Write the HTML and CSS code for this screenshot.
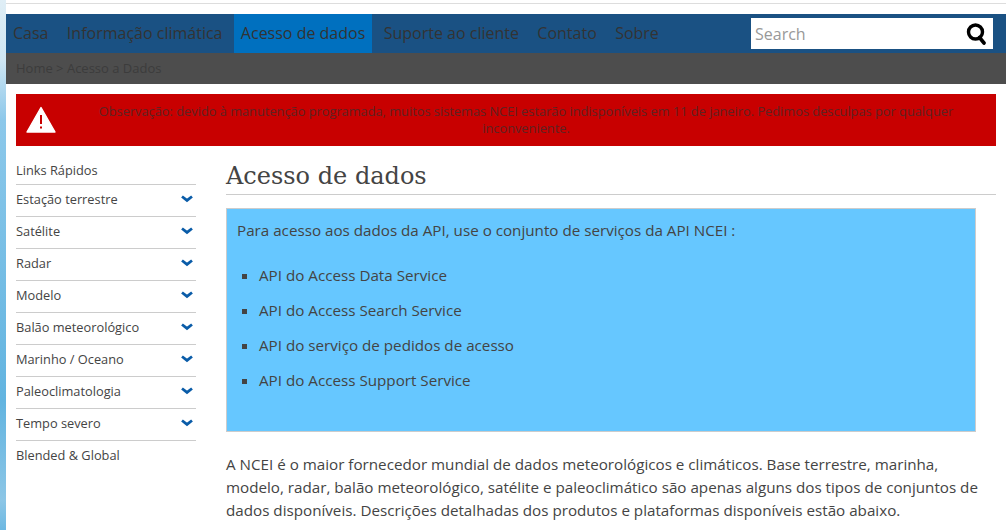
FILE: index.html
```html
<!DOCTYPE html>
<html lang="pt">
<head>
<meta charset="utf-8">
<title>Acesso de dados</title>
<link rel="stylesheet" href="styles.css">
</head>
<body>
<div class="page">
  <nav class="topnav">
    <ul class="menu">
      <li><a>Casa</a></li>
      <li><a>Informação climática</a></li>
      <li class="active"><a>Acesso de dados</a></li>
      <li><a>Suporte ao cliente</a></li>
      <li><a>Contato</a></li>
      <li><a>Sobre</a></li>
    </ul>
    <div class="search">
      <span class="search-text">Search</span>
      <svg class="search-icon" width="20" height="22" viewBox="0 0 20 22"><circle cx="9.5" cy="9" r="7" fill="none" stroke="#000" stroke-width="3.4"/><path d="M13.5 14.5L18 20" stroke="#000" stroke-width="3.6" stroke-linecap="round"/></svg>
    </div>
  </nav>
  <div class="crumbs">Home &gt; Acesso a Dados</div>
  <div class="alert">
    <svg class="alert-icon" width="30" height="28" viewBox="0 0 30 28"><path d="M15 1.5L29 26H1z" fill="#fff" stroke="#fff" stroke-width="1.4" stroke-linejoin="round"/><rect x="14" y="9" width="2" height="9" fill="#c80000"/><rect x="14" y="20.5" width="2" height="2" fill="#c80000"/></svg>
    <p class="alert-text">Observação: devido à manutenção programada, muitos sistemas NCEI estarão indisponíveis em 11 de janeiro. Pedimos desculpas por qualquer inconveniente.</p>
  </div>
  <div class="columns">
    <aside class="side">
      <div class="side-item">Links Rápidos</div>
      <div class="side-item has-arrow">Estação terrestre<svg class="chev" width="12" height="8" viewBox="0 0 12 8"><path d="M1 1.5L6 5.4l5-3.9" fill="none" stroke="#0a5ca8" stroke-width="2.8"/></svg></div>
      <div class="side-item has-arrow">Satélite<svg class="chev" width="12" height="8" viewBox="0 0 12 8"><path d="M1 1.5L6 5.4l5-3.9" fill="none" stroke="#0a5ca8" stroke-width="2.8"/></svg></div>
      <div class="side-item has-arrow">Radar<svg class="chev" width="12" height="8" viewBox="0 0 12 8"><path d="M1 1.5L6 5.4l5-3.9" fill="none" stroke="#0a5ca8" stroke-width="2.8"/></svg></div>
      <div class="side-item has-arrow">Modelo<svg class="chev" width="12" height="8" viewBox="0 0 12 8"><path d="M1 1.5L6 5.4l5-3.9" fill="none" stroke="#0a5ca8" stroke-width="2.8"/></svg></div>
      <div class="side-item has-arrow">Balão meteorológico<svg class="chev" width="12" height="8" viewBox="0 0 12 8"><path d="M1 1.5L6 5.4l5-3.9" fill="none" stroke="#0a5ca8" stroke-width="2.8"/></svg></div>
      <div class="side-item has-arrow">Marinho / Oceano<svg class="chev" width="12" height="8" viewBox="0 0 12 8"><path d="M1 1.5L6 5.4l5-3.9" fill="none" stroke="#0a5ca8" stroke-width="2.8"/></svg></div>
      <div class="side-item has-arrow">Paleoclimatologia<svg class="chev" width="12" height="8" viewBox="0 0 12 8"><path d="M1 1.5L6 5.4l5-3.9" fill="none" stroke="#0a5ca8" stroke-width="2.8"/></svg></div>
      <div class="side-item has-arrow">Tempo severo<svg class="chev" width="12" height="8" viewBox="0 0 12 8"><path d="M1 1.5L6 5.4l5-3.9" fill="none" stroke="#0a5ca8" stroke-width="2.8"/></svg></div>
      <div class="side-item">Blended &amp; Global</div>
    </aside>
    <main class="content">
      <h1 class="title">Acesso de dados</h1>
      <section class="infobox">
        <p class="infobox-lead">Para acesso aos dados da API, use o conjunto de serviços da API NCEI :</p>
        <ul class="api-list">
          <li>API do Access Data Service</li>
          <li>API do Access Search Service</li>
          <li>API do serviço de pedidos de acesso</li>
          <li>API do Access Support Service</li>
        </ul>
      </section>
      <p class="intro">A NCEI é o maior fornecedor mundial de dados meteorológicos e climáticos. Base terrestre, marinha, modelo, radar, balão meteorológico, satélite e paleoclimático são apenas alguns dos tipos de conjuntos de dados disponíveis. Descrições detalhadas dos produtos e plataformas disponíveis estão abaixo.</p>
    </main>
  </div>
</div>
</body>
</html>
```
FILE: styles.css
```css
* { box-sizing: border-box; }
html, body { margin: 0; padding: 0; height: 530px; overflow: hidden; }
body {
  font-family: "Open Sans", "Liberation Sans", sans-serif;
  color: #444;
  background: linear-gradient(to bottom, #dfeef6 0, #cfe6f3 60px, #8cc8ea 120px, #62b4e0 400px, #8cc6e6 500px, #6db8e2 530px);
}
.page { margin-left: 6px; height: 530px; background: #fff; padding-top: 14px; position: relative; overflow: hidden; }
.page::before { content: ""; position: absolute; top: 3px; left: 0; right: 0; height: 1px; background: #ddd; }
.topnav { display: flex; justify-content: space-between; height: 39px; background: #1a5183; padding-right: 13px; }
.menu { display: flex; gap: 4px; list-style: none; margin: 0; padding: 0; font-size: 16px; line-height: 39px; color: #333; }
.menu li { padding: 0 7.2px; }
.menu li:first-child { padding-left: 7px; }
.menu .active { background: #0070bf; }
.search { width: 242px; height: 31px; margin-top: 4px; background: #fff; display: flex; align-items: center; justify-content: space-between; padding: 0 7px 0 4px; }
.search-text { font-size: 16px; color: #999; }
.crumbs { height: 31px; background: #4d4d4d; padding-left: 10px; font-size: 13px; line-height: 30px; color: #3c3c3c; }
.alert { margin: 10px 10px 0; height: 52px; background: #c80000; display: flex; align-items: center; padding-left: 10px; }
.alert-icon { flex: none; }
.alert-text { margin: 0; flex: 1; padding: 0 30px 0 30px; font-size: 12.8px; line-height: 17px; text-align: center; color: #5e2222; }
.columns { display: flex; padding: 14px 10px 0; }
.side { width: 180px; flex: none; font-size: 12.8px; color: #444; }
.side-item { height: 32px; line-height: 31px; border-bottom: 1px solid #ccc; display: flex; justify-content: space-between; align-items: center; padding: 0 3px 2px 0; }
.side-item:first-child { height: 25px; padding-bottom: 3px; }
.side-item:last-child { border-bottom: 0; padding-bottom: 4px; }
.chev { flex: none; margin-top: -1px; }
.content { margin-left: 30px; flex: 1; }
.title { margin: 0; height: 35px; font-family: "DejaVu Serif", "Liberation Serif", serif; font-weight: 400; font-size: 24px; line-height: 32px; color: #444; border-bottom: 1px solid #ccc; }
.infobox { margin-top: 13px; width: 750px; height: 224px; background: #66c7ff; border: 1px solid #ccc; padding: 0 10px; font-size: 15.2px; }
.infobox-lead { margin: 11px 0 0; line-height: 20px; }
.api-list { margin: 18px 0 0; padding: 0 0 0 22px; list-style: square; }
.api-list li { height: 35px; line-height: 35px; }
.intro { margin: 21px 0 0; font-size: 15.2px; line-height: 22.8px; color: #444; }
```
